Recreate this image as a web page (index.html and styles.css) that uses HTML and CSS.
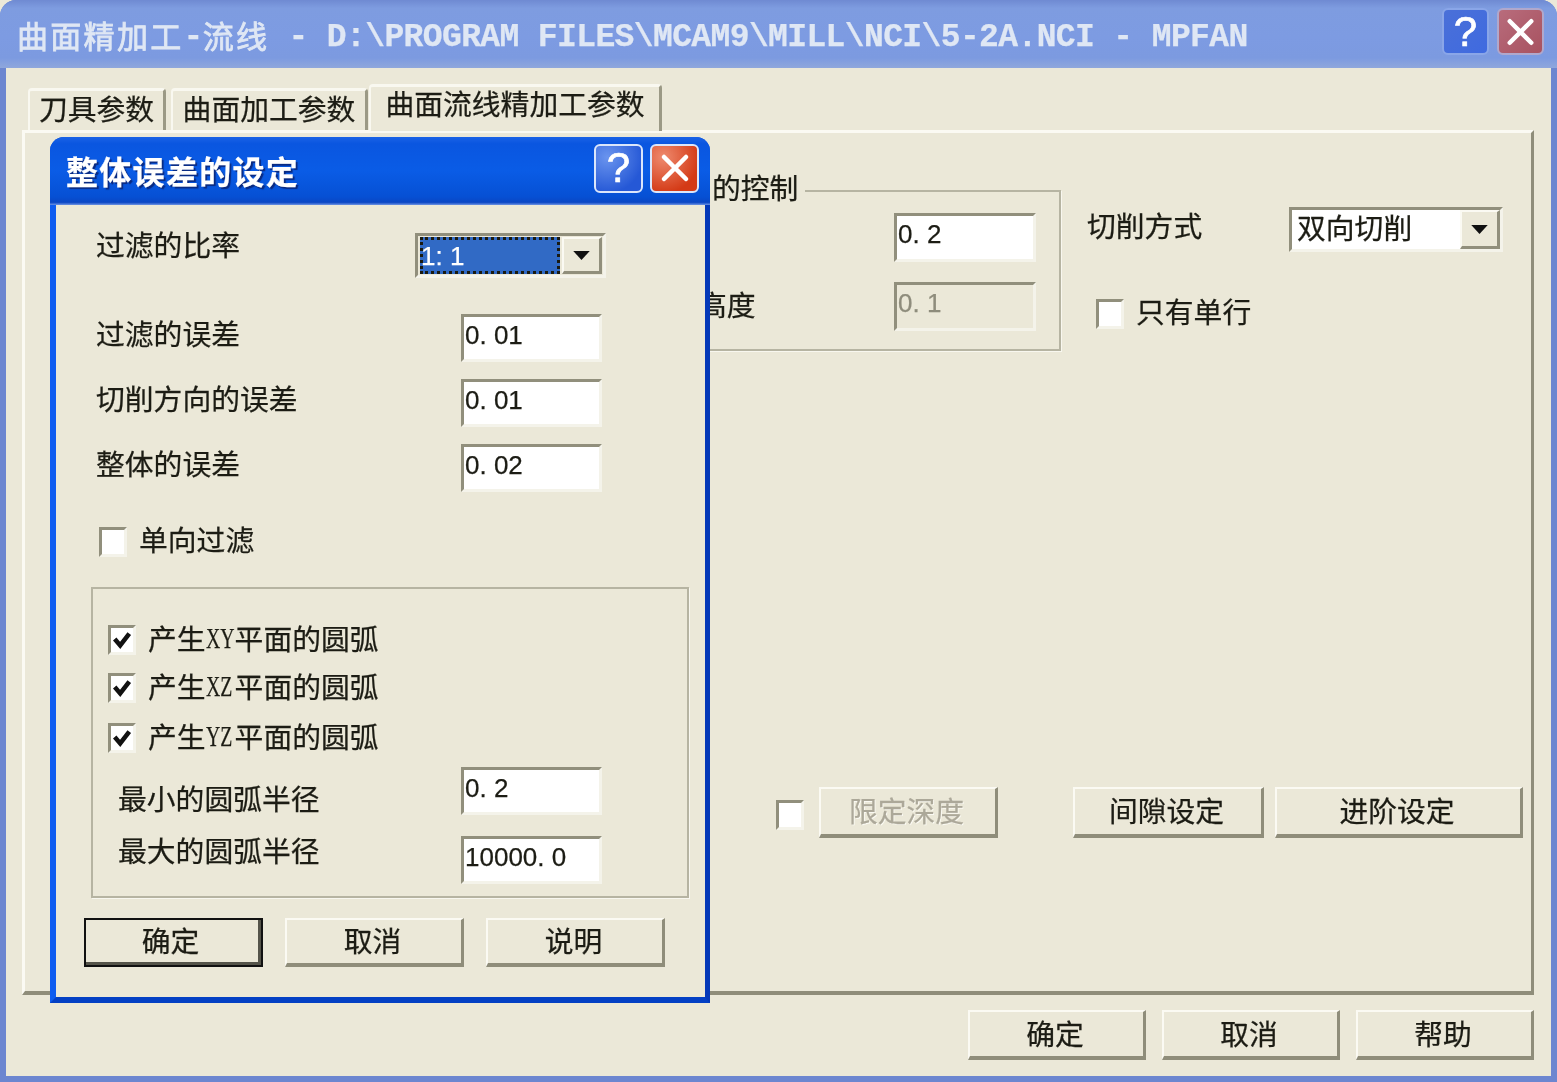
FILE: index.html
```html
<!DOCTYPE html>
<html lang="zh">
<head>
<meta charset="utf-8">
<title>曲面精加工-流线</title>
<link rel="stylesheet" href="styles.css">
</head>
<body>
<div class="window">
  <header class="titlebar">
    <div class="title"><span class="title-cjk">曲面精加工</span><span class="title-lat">-</span><span class="title-cjk">流线</span><span class="title-lat"> - D:\PROGRAM FILES\MCAM9\MILL\NCI\5-2A.NCI - MPFAN</span></div>
    <div class="caption-btns">
      <div class="cap cap-help cap-faded">?</div>
      <div class="cap cap-close cap-closed-faded"><svg viewBox="0 0 48 48" class="cap-x"><path d="M12 12 36 36M36 12 12 36"/></svg></div>
    </div>
  </header>
  <main class="client">
    <nav class="tabs">
      <div class="tab tab-a">刀具参数</div>
      <div class="tab tab-b">曲面加工参数</div>
      <div class="tab tab-active">曲面流线精加工参数</div>
    </nav>
    <section class="panel">
      <div class="top-row">
        <div class="depth-group">
          <div class="depth-legend">的控制</div>
          <div class="depth-row"><div class="edit edit-wide"><span class="m">0<span class="dot">.</span>2</span></div></div>
          <div class="depth-row depth-row-labelled"><span class="depth-label">高度</span><div class="edit edit-wide edit-off"><span class="m">0<span class="dot">.</span>1</span></div></div>
        </div>
        <div class="side">
          <div class="side-row">
            <span class="side-label">切削方式</span>
            <div class="combo combo-cut"><span class="combo-text">双向切削</span><div class="combo-btn"><svg viewBox="0 0 20 12" class="arrow"><path d="M1 1H19L10 11Z"/></svg></div></div>
          </div>
          <div class="check-row single-row"><div class="check"></div><span>只有单行</span></div>
        </div>
      </div>
      <div class="action-row">
        <div class="check limit-check"></div>
        <div class="btn btn-off btn-limit">限定深度</div>
        <div class="btn btn-gap">间隙设定</div>
        <div class="btn btn-adv">进阶设定</div>
      </div>
    </section>
    <footer class="main-btns">
      <div class="btn btn-main">确定</div>
      <div class="btn btn-main">取消</div>
      <div class="btn btn-main">帮助</div>
    </footer>
  </main>

  <div class="dialog">
    <header class="dlg-title">
      <div class="dlg-caption">整体误差的设定</div>
      <div class="caption-btns dlg-caps">
        <div class="cap cap-help">?</div>
        <div class="cap cap-close"><svg viewBox="0 0 48 48" class="cap-x"><path d="M12 12 36 36M36 12 12 36"/></svg></div>
      </div>
    </header>
    <div class="dlg-body">
      <div class="form-row ratio-row">
        <span class="lbl lbl-ratio">过滤的比率</span>
        <div class="combo combo-ratio"><div class="combo-sel"><span class="m">1<span class="dot">:</span>1</span></div><div class="combo-btn"><svg viewBox="0 0 20 12" class="arrow"><path d="M1 1H19L10 11Z"/></svg></div></div>
      </div>
      <div class="form-row first-edit"><span class="lbl">过滤的误差</span><div class="edit"><span class="m">0<span class="dot">.</span>01</span></div></div>
      <div class="form-row next-edit"><span class="lbl">切削方向的误差</span><div class="edit"><span class="m">0<span class="dot">.</span>01</span></div></div>
      <div class="form-row next-edit"><span class="lbl">整体的误差</span><div class="edit"><span class="m">0<span class="dot">.</span>02</span></div></div>
      <div class="check-row oneway"><div class="check"></div><span>单向过滤</span></div>
      <div class="arc-group">
        <div class="check-row arc-check"><div class="check on"><svg viewBox="0 0 22 22" class="tick"><path d="M3 10 9 17 19 4"/></svg></div><span>产生<span class="xy">XY</span>平面的圆弧</span></div>
        <div class="check-row arc-check arc-2"><div class="check on"><svg viewBox="0 0 22 22" class="tick"><path d="M3 10 9 17 19 4"/></svg></div><span>产生<span class="xy">XZ</span>平面的圆弧</span></div>
        <div class="check-row arc-check arc-3"><div class="check on"><svg viewBox="0 0 22 22" class="tick"><path d="M3 10 9 17 19 4"/></svg></div><span>产生<span class="xy">YZ</span>平面的圆弧</span></div>
        <div class="arc-row arc-min"><span class="lbl lbl-min">最小的圆弧半径</span><div class="edit"><span class="m">0<span class="dot">.</span>2</span></div></div>
        <div class="arc-row arc-max"><span class="lbl lbl-max">最大的圆弧半径</span><div class="edit"><span class="m">10000<span class="dot">.</span>0</span></div></div>
      </div>
      <div class="dlg-btns">
        <div class="btn btn-dlg btn-default">确定</div>
        <div class="btn btn-dlg">取消</div>
        <div class="btn btn-dlg">说明</div>
      </div>
    </div>
  </div>
</div>
</body>
</html>
```
FILE: styles.css
```css
* { box-sizing: border-box; }
html, body { margin: 0; padding: 0; background: #ebe8d8; }
body { width: 1557px; height: 1082px; overflow: hidden; }

.window {
  position: relative;
  width: 1557px;
  height: 1082px;
  display: flex;
  flex-direction: column;
  background: #6c86d0;
  border-radius: 16px 16px 0 0;
  font-family: "Noto Sans CJK SC", sans-serif;
  font-size: 28.8px;
  line-height: 40px;
  color: #1c1c14;
  -webkit-text-stroke: 0.25px;
  filter: blur(0.55px);
  overflow: hidden;
}
.m { font-family: "Liberation Sans", sans-serif; font-size: 26px; }
.dot { letter-spacing: 7.2px; }
.xy {
  display: inline-block;
  width: 29px;
  font-family: "Liberation Serif", serif;
  font-size: 30px;
  line-height: 32px;
  letter-spacing: 0;
  vertical-align: top;
  transform: scaleX(0.66);
  transform-origin: left center;
}

/* main title bar */
.titlebar {
  height: 68px;
  flex: none;
  display: flex;
  align-items: center;
  justify-content: space-between;
  padding: 0 13px 0 17px;
  background: linear-gradient(180deg, #6f8ad2 0%, #7e9ce0 12%, #7d9be2 55%, #7c9ae0 85%, #8fa7dc 100%);
}
.title { color: #dfe7f4; font-weight: 700; white-space: pre; line-height: 40px; margin-top: 7px; display: flex; align-items: center; }
.title-cjk { font-size: 31px; letter-spacing: 2.3px; font-weight: 400; -webkit-text-stroke: 0.8px #dfe7f4; margin-top: -6px; }
.title-lat { font-family: "Liberation Mono", monospace; font-size: 33px; letter-spacing: -0.62px; }

.caption-btns { display: flex; gap: 8px; margin-top: -5px; }
.cap {
  width: 47px;
  height: 47px;
  border: 2px solid #dbe6fb;
  border-radius: 6px;
  display: flex;
  align-items: center;
  justify-content: center;
  color: #fff;
  font-family: "Liberation Sans", sans-serif;
  font-size: 42px;
  -webkit-text-stroke: 0.7px #fff;
  line-height: 1;
}
.cap-help { background: radial-gradient(circle at 25% 25%, #6a94ee, #2558d6 75%); }
.cap-close { background: radial-gradient(circle at 25% 25%, #ee8a6e, #d43a16 75%); }
.cap-faded { background: linear-gradient(135deg, #4a70d8, #3f6ae0); border-color: #8aa6e8; }
.cap-closed-faded { background: linear-gradient(135deg, #b86c7c, #a85260); border-color: #b0a8cc; }
.cap-x { width: 44px; height: 44px; fill: none; stroke: #fff; stroke-width: 5; stroke-linecap: round; }

/* client area */
.client {
  flex: none;
  height: 1008px;
  margin: 0 6px;
  padding: 0 17px 0 16px;
  background: #ebe8d8;
}
.tabs { display: flex; align-items: flex-end; height: 62px; padding: 16px 0 0 6px; }
.tab {
  height: 42px;
  display: flex;
  align-items: center;
  justify-content: center;
  padding-bottom: 6px;
  background: #ebe8d8;
  border-top: 3px solid #f9f8f0;
  border-left: 2px solid #f9f8f0;
  border-right: 3px solid #9b9985;
  border-radius: 4px 4px 0 0;
  line-height: 36px;
}
.tab-a { width: 138px; margin-right: 5px; }
.tab-b { width: 197px; margin-right: 1px; }
.tab-active { width: 293px; height: 47px; position: relative; margin-bottom: -1px; padding-bottom: 12px; }

.panel {
  height: 865px;
  border-top: 3px solid #fbfaf3;
  border-left: 3px solid #fbfaf3;
  border-right: 3px solid #8f8d7a;
  border-bottom: 4px solid #8f8d7a;
}
.top-row { display: flex; align-items: flex-start; margin: 57px 0 0 35px; gap: 27px; }
.depth-group {
  position: relative;
  width: 1001px;
  height: 161px;
  padding: 21px 23px 0 0;
  border: 2px solid #b6b4a2;
  box-shadow: 1px 1px 0 #f8f7ef;
}
.depth-legend {
  position: absolute;
  left: 640px;
  top: -25px;
  padding: 0 7px 0 10px;
  background: #ebe8d8;
}
.depth-row { display: flex; justify-content: flex-end; align-items: flex-start; }
.depth-row-labelled { justify-content: space-between; margin-top: 20px; padding-left: 636px; }
.depth-label { margin-top: 2px; }

.edit {
  width: 141px;
  height: 48px;
  flex: none;
  padding-left: 1px;
  background: #fff;
  border-top: 3px solid #918f7c;
  border-left: 3px solid #918f7c;
  border-right: 3px solid #f4f3ea;
  border-bottom: 3px solid #f4f3ea;
  line-height: 30px;
  white-space: nowrap;
}
.edit-wide { width: 142px; height: 49px; }
.edit-off { background: #ebe8d8; color: #8e8c7c; }

.side { width: 415px; padding-top: 17px; }
.side-row { display: flex; justify-content: space-between; align-items: flex-start; }
.side-label { line-height: 36px; margin-left: -1px; }
.single-row { margin: 47px 0 0 8px; }
.single-row > span { margin-top: -6px; }

.combo {
  display: flex;
  align-items: stretch;
  background: #fff;
  border-top: 3px solid #918f7c;
  border-left: 3px solid #918f7c;
  border-right: 3px solid #f4f3ea;
  border-bottom: 3px solid #f4f3ea;
}
.combo-cut { width: 214px; height: 45px; justify-content: space-between; }
.combo-text { padding-left: 5px; line-height: 34px; }
.combo-btn {
  width: 40px;
  display: flex;
  align-items: center;
  justify-content: center;
  background: #ebe8d8;
  border-top: 2px solid #fbfaf3;
  border-left: 2px solid #fbfaf3;
  border-right: 3px solid #918f7c;
  border-bottom: 3px solid #918f7c;
}
.arrow { width: 19px; height: 11px; fill: #111; }
.combo-ratio { width: 191px; height: 45px; padding: 1px 1px 1px 2px; background: #ebe8d8; margin-right: -4px; }
.combo-sel {
  flex: 1;
  margin-right: 2px;
  padding-left: 1px;
  background: #316ac5;
  outline: 3px dotted #1a1a10;
  outline-offset: -3px;
  color: #fff;
  line-height: 32px;
  white-space: nowrap;
}

.check-row { display: flex; align-items: center; line-height: 32px; }
.check-row > span { margin-left: 12px; }
.check {
  width: 28px;
  height: 30px;
  flex: none;
  background: #fff;
  border-top: 3px solid #918f7c;
  border-left: 3px solid #918f7c;
  border-right: 3px solid #f4f3ea;
  border-bottom: 3px solid #f4f3ea;
}
.check.on { display: flex; align-items: center; justify-content: center; }
.tick { width: 20px; height: 20px; fill: none; stroke: #111; stroke-width: 5; }

.action-row { display: flex; align-items: flex-start; margin: 436px 0 0 751px; }
.limit-check { margin-top: 13px; }
.btn {
  height: 51px;
  display: flex;
  align-items: center;
  justify-content: center;
  padding: 0 3px 3px 0;
  background: #ebe8d8;
  border-top: 2px solid #fbfaf3;
  border-left: 2px solid #fbfaf3;
  border-right: 3px solid #8f8d7a;
  border-bottom: 4px solid #8f8d7a;
  line-height: 36px;
  flex: none;
}
.btn-limit { width: 179px; margin-left: 15px; }
.btn-off { color: #aca899; text-shadow: 1px 1px 0 #fbfaf3; }
.btn-gap { width: 191px; margin-left: 75px; }
.btn-adv { width: 248px; margin-left: 11px; }

.main-btns { display: flex; justify-content: flex-end; gap: 16px; margin-top: 15px; }
.btn-main { width: 178px; height: 50px; }

/* modal dialog */
.dialog {
  position: absolute;
  left: 50px;
  top: 137px;
  width: 660px;
  height: 866px;
  display: flex;
  flex-direction: column;
  border-radius: 14px 14px 0 0;
  background: #0b4fd6;
  overflow: hidden;
}
.dlg-title {
  height: 68px;
  flex: none;
  display: flex;
  align-items: center;
  justify-content: space-between;
  padding: 0 11px 0 16px;
  background: linear-gradient(180deg, #1a62e6 0%, #0a56e0 10%, #0a5ce6 50%, #0650d4 88%, #0a46c4 96%, #6d93e4 100%);
}
.dlg-caption {
  color: #fff;
  font-size: 32px;
  font-weight: 700;
  letter-spacing: 1.3px;
  text-shadow: 2px 2px 1px #0a2a80;
  line-height: 40px;
  margin-top: -2px;
}
.dlg-caps { margin-top: -6px; gap: 7px; }
.dlg-caps .cap { width: 49px; height: 49px; }

.dlg-body {
  flex: 1;
  padding: 28px 16px 0 35px;
  background: #ebe8d8;
  border-left: 6px solid #0e5cf0;
  border-right: 5px solid #0438b8;
  border-bottom: 6px solid #0440c4;
}
.form-row { display: flex; justify-content: space-between; align-items: flex-start; padding: 0 87px 0 5px; }
.ratio-row { height: 45px; }
.first-edit { margin-top: 36px; }
.next-edit { margin-top: 17px; }
.lbl { white-space: nowrap; margin-top: -1px; }
.lbl-ratio { margin-top: -9px; }
.oneway { margin: 35px 0 0 8px; height: 29px; }
.oneway > span { margin-top: -5px; }

.arc-group {
  margin-top: 31px;
  width: 598px;
  height: 311px;
  padding: 36px 85px 0 15px;
  border: 2px solid #b6b4a2;
  box-shadow: 1px 1px 0 #f8f7ef;
}
.arc-check { height: 29px; }
.arc-check > span { margin-top: -4px; }
.arc-2 { margin-top: 19px; }
.arc-3 { margin-top: 21px; }
.arc-row { display: flex; justify-content: space-between; align-items: flex-start; padding-left: 10px; }
.arc-min { margin-top: 15px; height: 48px; }
.arc-max { margin-top: 21px; }
.lbl-min { margin-top: 11px; }
.lbl-max { margin-top: -6px; }

.dlg-btns { display: flex; margin: 20px 0 0 -7px; gap: 22px; }
.btn-dlg { width: 179px; height: 49px; }
.btn-default { outline: 2px solid #111; outline-offset: -2px; border-right-width: 5px; border-bottom-width: 5px; border-right-color: #55544a; border-bottom-color: #55544a; }
```
